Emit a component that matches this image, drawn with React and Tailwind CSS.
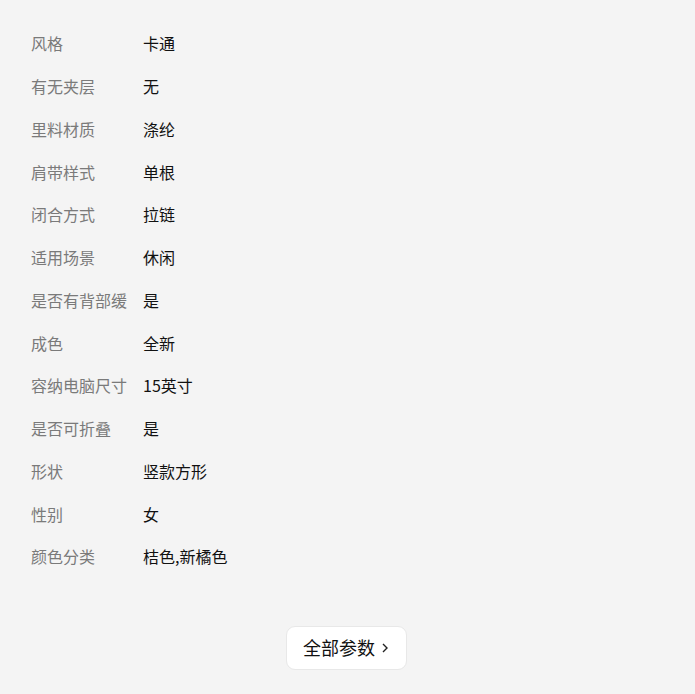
import React from "react";

const rows = [
  ["风格", "卡通"],
  ["有无夹层", "无"],
  ["里料材质", "涤纶"],
  ["肩带样式", "单根"],
  ["闭合方式", "拉链"],
  ["适用场景", "休闲"],
  ["是否有背部缓", "是"],
  ["成色", "全新"],
  ["容纳电脑尺寸", "15英寸"],
  ["是否可折叠", "是"],
  ["形状", "竖款方形"],
  ["性别", "女"],
  ["颜色分类", "桔色,新橘色"],
];

export default function App() {
  return (
    <div
      className="w-[695px] h-[694px] bg-[#f4f4f4] overflow-hidden"
      style={{ fontFamily: '"Microsoft YaHei", "Noto Sans CJK SC", sans-serif' }}
    >
      <div className="flex flex-col pt-[22px] pl-[31px]">
        {rows.map(([k, v]) => (
          <div key={k} className="flex items-center h-[42.75px] text-[16px]">
            <span className="w-[112px] text-[#7a7a7a] whitespace-nowrap">{k}</span>
            <span className="text-[#111]">{v}</span>
          </div>
        ))}
      </div>
      <div className="flex justify-center mt-[48px] pr-[3px]">
        <div className="flex items-center justify-center gap-[6px] w-[121px] h-[44px] bg-white border border-[#e8e8e8] rounded-[9px] text-[18px] text-[#111]">
          <span>全部参数</span>
          <svg width="8" height="12" viewBox="0 0 8 12" fill="none" stroke="#222" strokeWidth="1.4">
            <path d="M2 2l4 4-4 4" />
          </svg>
        </div>
      </div>
    </div>
  );
}
